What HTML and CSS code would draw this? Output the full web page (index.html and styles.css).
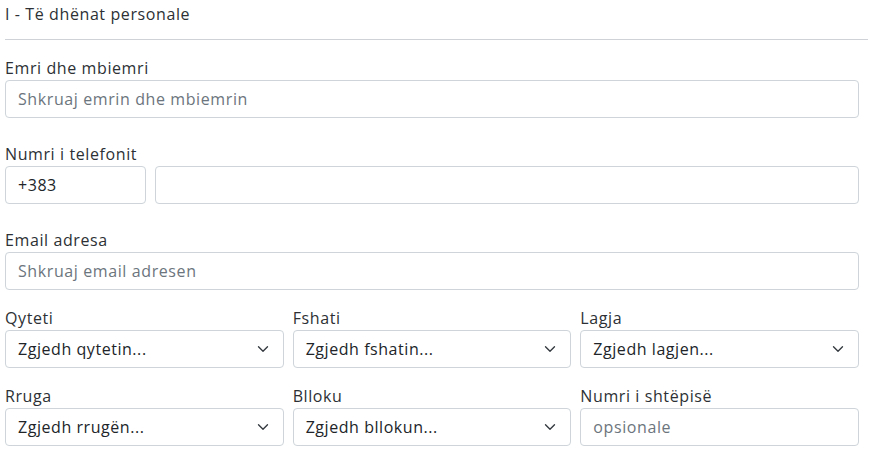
FILE: index.html
```html
<!DOCTYPE html>
<html lang="sq">
<head>
<meta charset="utf-8">
<title>Të dhënat personale</title>
<link rel="stylesheet" href="styles.css">
</head>
<body>
<div class="page">
  <div class="section-title">I - Të dhënat personale</div>
  <hr class="divider">
  <div class="form">
    <div class="group">
      <label class="label">Emri dhe mbiemri</label>
      <div class="control placeholder">Shkruaj emrin dhe mbiemrin</div>
    </div>
    <div class="group">
      <label class="label">Numri i telefonit</label>
      <div class="phone">
        <div class="control prefix">+383</div>
        <div class="control"></div>
      </div>
    </div>
    <div class="group">
      <label class="label">Email adresa</label>
      <div class="control placeholder">Shkruaj email adresen</div>
    </div>
    <div class="grid">
      <div class="cell">
        <label class="label">Qyteti</label>
        <div class="control select"><span>Zgjedh qytetin...</span><svg class="chev" viewBox="0 0 16 16"><path d="M2 5l6 6 6-6"/></svg></div>
      </div>
      <div class="cell">
        <label class="label">Fshati</label>
        <div class="control select"><span>Zgjedh fshatin...</span><svg class="chev" viewBox="0 0 16 16"><path d="M2 5l6 6 6-6"/></svg></div>
      </div>
      <div class="cell">
        <label class="label">Lagja</label>
        <div class="control select"><span>Zgjedh lagjen...</span><svg class="chev" viewBox="0 0 16 16"><path d="M2 5l6 6 6-6"/></svg></div>
      </div>
      <div class="cell">
        <label class="label">Rruga</label>
        <div class="control select"><span>Zgjedh rrugën...</span><svg class="chev" viewBox="0 0 16 16"><path d="M2 5l6 6 6-6"/></svg></div>
      </div>
      <div class="cell">
        <label class="label">Blloku</label>
        <div class="control select"><span>Zgjedh bllokun...</span><svg class="chev" viewBox="0 0 16 16"><path d="M2 5l6 6 6-6"/></svg></div>
      </div>
      <div class="cell">
        <label class="label">Numri i shtëpisë</label>
        <div class="control placeholder">opsionale</div>
      </div>
    </div>
  </div>
</div>
</body>
</html>
```
FILE: styles.css
```css
html, body {
  margin: 0;
  padding: 0;
  background: #ffffff;
}
body {
  font-family: "Open Sans", "Liberation Sans", sans-serif;
  color: #212529;
}
.page {
  padding: 2px 3px 0 5px;
}
.section-title {
  font-size: 16px;
  line-height: 24px;
  letter-spacing: 0.6px;
  color: #2d3135;
  margin-bottom: 13px;
}
.divider {
  margin: 0;
  border: 0;
  border-top: 1px solid #cfd2d6;
  height: 0;
}
.form {
  width: 854px;
  padding-top: 16px;
}
.group {
  margin-bottom: 24px;
}
.group:nth-child(3) {
  margin-bottom: 16px;
}
.label {
  display: block;
  font-size: 16px;
  line-height: 24px;
  letter-spacing: 0.6px;
  color: #2d3135;
}
.control {
  box-sizing: border-box;
  height: 38px;
  border: 1px solid #ced4da;
  border-radius: 4px;
  padding: 0 12px;
  font-size: 16px;
  line-height: 36px;
  letter-spacing: 0.55px;
  color: #212529;
  background: #fff;
}
.placeholder {
  color: #6c757d;
  letter-spacing: 0.6px;
}
.phone {
  display: grid;
  grid-template-columns: 141px 1fr;
  gap: 9px;
}
.grid {
  display: grid;
  grid-template-columns: repeat(3, 1fr);
  column-gap: 9px;
  row-gap: 16px;
}
.select {
  display: flex;
  align-items: center;
  justify-content: space-between;
}
.chev {
  width: 16px;
  height: 12px;
  fill: none;
  stroke: #343a40;
  stroke-width: 1.8;
  stroke-linecap: round;
  stroke-linejoin: round;
}
```
